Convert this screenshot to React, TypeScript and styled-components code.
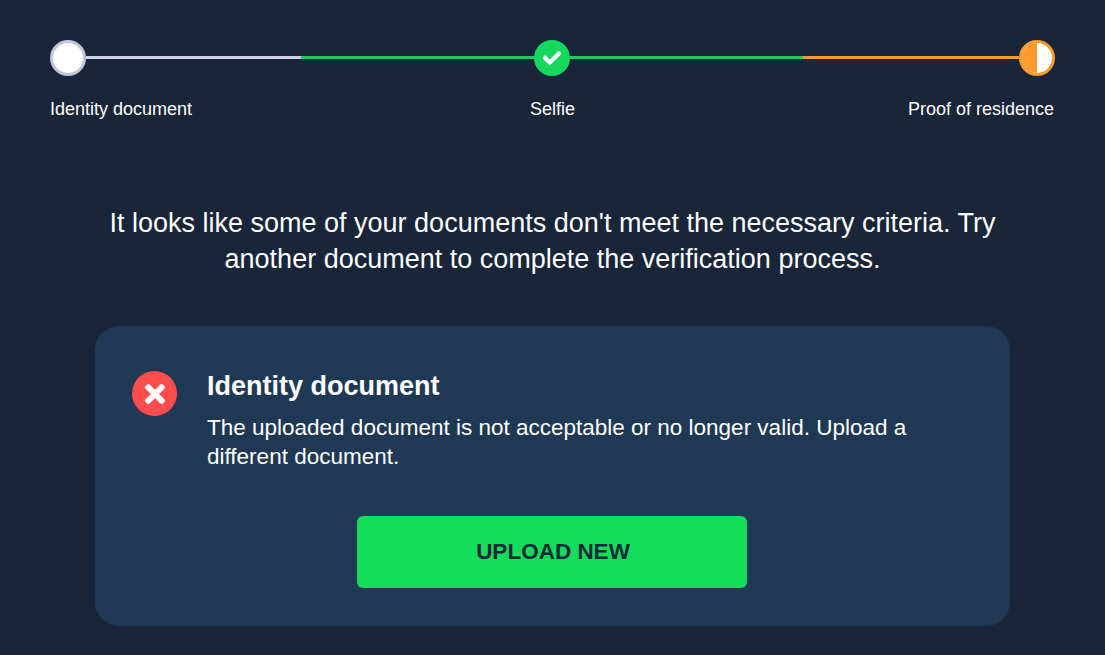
import React from 'react';
import styled, { createGlobalStyle } from 'styled-components';
import { FaCheck, FaTimes } from 'react-icons/fa';

const GlobalStyle = createGlobalStyle`
  html, body {
    margin : 0;
    padding : 0;
    background-color : #192538;
    font-family : "Liberation Sans", Arial, sans-serif;
    color : white;
  }
`;

const App = () => {
  return (
    <Page>
      <GlobalStyle />
      <Stepper>
        <Dot $kind="pending" />
        <Line $color="#cfcfe8" $grow={215} />
        <Line $color="#1ec95f" $grow={233} />
        <Dot $kind="done"><FaCheck /></Dot>
        <Line $color="#1ec95f" $grow={233} />
        <Line $color="#ff9a2e" $grow={216} />
        <Dot $kind="partial"><HalfFill /></Dot>
      </Stepper>
      <Labels>
        <span>Identity document</span>
        <span>Selfie</span>
        <span>Proof of residence</span>
      </Labels>
      <Message>
        It looks like some of your documents don't meet the necessary criteria. Try another document to complete the verification process.
      </Message>
      <Card>
        <CardRow>
          <ErrorIcon><FaTimes /></ErrorIcon>
          <div>
            <CardTitle>Identity document</CardTitle>
            <CardText>The uploaded document is not acceptable or no longer valid. Upload a different document.</CardText>
          </div>
        </CardRow>
        <UploadBtn>UPLOAD NEW</UploadBtn>
      </Card>
    </Page>
  );
};

const Page = styled.div`
  box-sizing : border-box;
  width : 1105px;
  height : 655px;
  padding : 40px 50px 0;
  overflow : hidden;
`;

const Stepper = styled.div`
  display : flex;
  align-items : center;
  height : 36px;
`;

const dotColors = {
  pending : { bg : 'white', border : '#c3c5dd' },
  done : { bg : '#14d95c', border : '#14d95c' },
  partial : { bg : 'white', border : '#ff9a2e' },
};

const Dot = styled.div<{ $kind : keyof typeof dotColors }>`
  box-sizing : border-box;
  flex : none;
  width : 36px;
  height : 36px;
  border-radius : 50%;
  border : 3px solid ${p => dotColors[p.$kind].border};
  background-color : ${p => dotColors[p.$kind].bg};
  color : white;
  font-size : 18px;
  display : flex;
  align-items : center;
  justify-content : center;
  overflow : hidden;
  svg {
    stroke : white;
    stroke-width : 24px;
  }
`;

const HalfFill = styled.div`
  align-self : stretch;
  width : 50%;
  margin-right : 50%;
  background-color : #ff9a2e;
`;

const Line = styled.div<{ $color : string; $grow : number }>`
  flex : ${p => p.$grow} 0 0;
  height : 3px;
  margin-bottom : 1px;
  background-color : ${p => p.$color};
`;

const Labels = styled.div`
  display : grid;
  grid-template-columns : 1fr auto 1fr;
  margin-top : 23px;
  padding-right : 1px;
  font-size : 18px;
  line-height : 20px;
  span:nth-child(2) {
    padding-left : 1px;
  }
  span:last-child {
    text-align : right;
  }
`;

const Message = styled.p`
  width : 900px;
  margin : 86px auto 0;
  text-align : center;
  font-size : 27px;
  line-height : 36px;
`;

const Card = styled.div`
  box-sizing : border-box;
  width : 915px;
  height : 300px;
  margin : 49px 0 0 45px;
  padding : 45px 38px 0 37px;
  border-radius : 24px;
  background-color : #1f3955;
`;

const CardRow = styled.div`
  display : flex;
  gap : 30px;
`;

const ErrorIcon = styled.div`
  flex : none;
  width : 45px;
  height : 45px;
  border-radius : 50%;
  background-color : #ff4d4d;
  color : white;
  font-size : 28px;
  display : flex;
  align-items : center;
  justify-content : center;
  svg {
    stroke : white;
    stroke-width : 16px;
  }
`;

const CardTitle = styled.h3`
  margin : 0;
  font-size : 27px;
  line-height : 30px;
  font-weight : 700;
`;

const CardText = styled.p`
  width : 740px;
  margin : 12px 0 0;
  font-size : 22.5px;
  line-height : 29px;
`;

const UploadBtn = styled.button`
  display : block;
  width : 390px;
  height : 72px;
  margin : 45px auto 0;
  padding : 0 0 0 2px;
  border : none;
  border-radius : 6px;
  background-color : #14dd5c;
  color : #0e2a38;
  font-family : inherit;
  font-size : 22.5px;
  font-weight : 700;
  cursor : pointer;
`;

export default App;
